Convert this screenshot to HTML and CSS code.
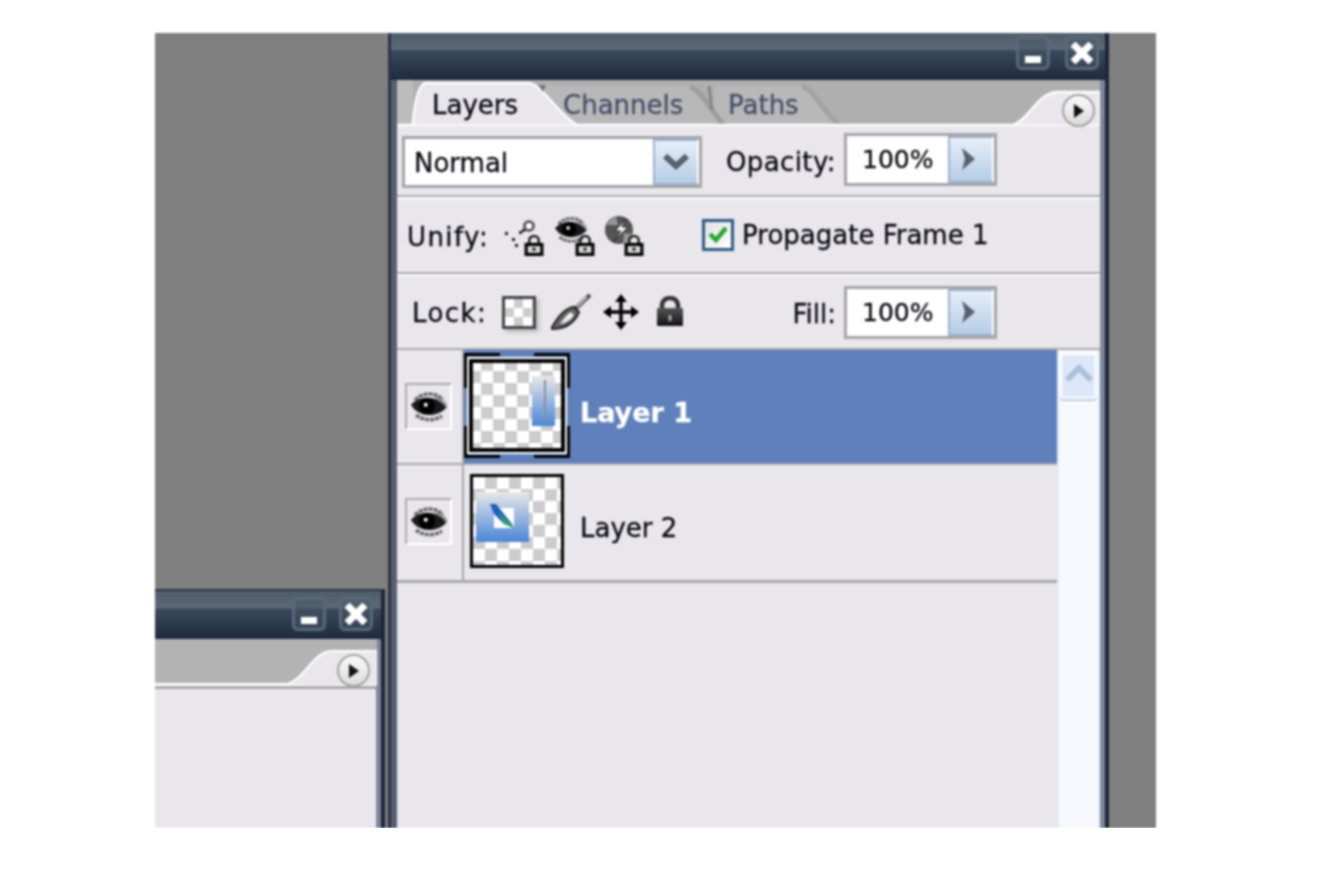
FILE: index.html

```html
<!DOCTYPE html>
<html lang="en">
<head>
  <meta charset="UTF-8" />
  <title>Layers palette</title>
  <link rel="stylesheet" href="styles.css">
</head>
<body>
  <svg class="defs" width="0" height="0">
    <defs>
      <symbol id="lock" viewBox="0 0 18 20">
        <path d="M4.5 9V5a4.5 4 0 0 1 9 0v4" fill="none" stroke="#222" stroke-width="2.4" />
        <rect x="1.5" y="9" width="15" height="9.5" fill="#d8d8d8" stroke="#000" stroke-width="3" />
        <rect x="7.5" y="12" width="3" height="3" fill="#222" />
      </symbol>
      <symbol id="eye" viewBox="0 0 36 30">
        <path d="M4 8C12 0 25 0 32 8" fill="none" stroke="#666" stroke-width="3.5" stroke-dasharray="4 1" />
        <path d="M0 13C8 3 27 3 36 15C27 26 8 26 0 13Z" fill="#1a1a1a" />
        <path d="M25 6C30 8 34 11 36 15" fill="none" stroke="#888" stroke-width="3.5" stroke-dasharray="3 1" />
        <path d="M5 23C13 29 23 29 31 24" fill="none" stroke="#666" stroke-width="3.5" stroke-dasharray="4 1" />
        <circle cx="16" cy="14" r="8" fill="#000" />
        <rect x="13" y="11" width="3.5" height="3.5" fill="#fff" />
      </symbol>
    </defs>
  </svg>

  <div class="canvas">

    <!-- small palette, cut off by the canvas on the left -->
    <div class="panel panel-small">
      <div class="titlebar">
        <span class="win-btn"><i class="min-mark"></i></span>
        <span class="win-btn"><svg width="24" height="22" viewBox="0 0 24 22"><path d="M3 2l18 18M21 2L3 20" stroke="#fff" stroke-width="7" /></svg></span>
      </div>
      <div class="panel-body">
        <div class="strip strip-small">
          <svg class="strip-art" width="222" height="47" viewBox="0 0 222 47">
            <rect width="222" height="47" fill="#b3b3b3" />
            <path d="M0 45H132C150 40 158 13 176 12H222V47H0Z" fill="#e9e7ec" stroke="#fff" stroke-width="2" />
          </svg>
          <span class="menu-btn"><svg width="12" height="16" viewBox="0 0 12 16"><path d="M1 1l10 7-10 7Z" fill="#111" /></svg></span>
        </div>
        <div class="small-content"></div>
      </div>
    </div>

    <!-- layers palette -->
    <div class="panel panel-layers">
      <div class="titlebar">
        <span class="win-btn"><i class="min-mark"></i></span>
        <span class="win-btn"><svg width="24" height="22" viewBox="0 0 24 22"><path d="M3 2l18 18M21 2L3 20" stroke="#fff" stroke-width="7" /></svg></span>
      </div>
      <div class="panel-body">

        <div class="strip">
          <svg class="strip-art" width="703" height="46" viewBox="0 0 703 46">
            <rect width="703" height="46" fill="#afafaf" />
            <rect width="16" height="44" fill="#bcbcbc" />
            <path d="M312 44L318 7Q319 5 323 5H403C416 6 424 30 444 44Z" fill="#b8b8b8" />
            <path d="M405 7C417 8 425 32 442 44" fill="none" stroke="#a2a2a2" stroke-width="5" />
            <path d="M140 44L146 5H291C302 8 312 27 326 44Z" fill="#b8b8b8" />
            <path d="M293 7C304 10 313 29 326 44" fill="none" stroke="#9e9e9e" stroke-width="5" />
            <path d="M312 6L315 30" stroke="#858585" stroke-width="3" />
            <path d="M0 45H16Q18 8 28 3H131C146 4 158 32 180 45H616C632 40 640 13 660 12H703V46H0Z" fill="#e9e7ec" stroke="#fff" stroke-width="2.4" />
            <path d="M141 5l8 0-3 7Z" fill="#777" />
          </svg>
          <div class="tabs">
            <span class="tab tab-active">Layers</span>
            <span class="tab">Channels</span>
            <span class="tab">Paths</span>
          </div>
          <span class="menu-btn"><svg width="12" height="16" viewBox="0 0 12 16"><path d="M1 1l10 7-10 7Z" fill="#111" /></svg></span>
        </div>

        <div class="row row-blend">
          <div class="select">
            <span class="select-value">Normal</span>
            <span class="arrow-btn"><svg width="26" height="18" viewBox="0 0 26 18"><path d="M2 3l11 10L24 3" fill="none" stroke="#56606e" stroke-width="6" /></svg></span>
          </div>
          <span class="label label-opacity">Opacity:</span>
          <div class="spin spin-up">
            <span class="spin-value">100%</span>
            <span class="arrow-btn"><svg class="spin-arrow" width="13" height="22" viewBox="0 0 13 22"><path d="M0 0l13 11L0 22l3-11Z" fill="#56606e" /></svg></span>
          </div>
        </div>

        <div class="row row-unify">
          <span class="label label-spaced">Unify:</span>
          <svg class="icon icon-pos" width="40" height="40" viewBox="0 0 40 40">
            <circle cx="25" cy="10" r="4.5" fill="#fff" stroke="#444" stroke-width="2.6" />
            <path d="M1 16h3v3H1zM8 22h3v3H8zM11 28h3v3h-3zM15 15h3v3h-3zM18 13h3v3h-3z" fill="#222" />
            <use href="#lock" x="20" y="19" width="20" height="21" />
          </svg>
          <svg class="icon icon-eye" width="40" height="40" viewBox="0 0 40 40">
            <use href="#eye" x="0" y="-1" width="32" height="30" />
            <use href="#lock" x="20" y="19" width="20" height="21" />
          </svg>
          <svg class="icon icon-style" width="40" height="40" viewBox="0 0 40 40">
            <circle cx="15" cy="14" r="14" fill="#555" />
            <path d="M3 9a13 13 0 0 1 9-8l2 8ZM19 28a13 13 0 0 0 9-10l-8-1Z" fill="#999" />
            <path d="M22 3L11 15h6L9 26l15-15h-6Z" fill="#fff" stroke="#222" />
            <use href="#lock" x="20" y="19" width="20" height="21" />
          </svg>
          <span class="check"><svg width="20" height="18" viewBox="0 0 20 18"><path d="M2 8l6 6L18 2" fill="none" stroke="#2aa52e" stroke-width="4.5" /></svg></span>
          <span class="label label-frame">Propagate Frame 1</span>
        </div>

        <div class="row row-lock">
          <span class="label label-spaced">Lock:</span>
          <span class="lock-trans"></span>
          <svg class="icon icon-brush" width="40" height="36" viewBox="0 0 40 36">
            <path d="M39 1L22 17" stroke="#444" stroke-width="4" />
            <path d="M36 3L26 13" stroke="#eee" stroke-width="1.5" />
            <path d="M23 13C13 14 6 24 0 35C12 35 23 30 28 18Z" fill="#666" stroke="#222" stroke-width="2" />
            <path d="M20 18C15 21 12 26 9 30C15 29 20 26 23 21Z" fill="#eee" />
          </svg>
          <svg class="icon icon-move" width="36" height="36" viewBox="0 0 36 36">
            <path d="M18 3V33M3 18H33" stroke="#000" stroke-width="3.4" />
            <path d="M18 0l6 8H12ZM18 36l-6-8H24ZM0 18l8-6V24ZM36 18l-8 6V12Z" fill="#000" />
          </svg>
          <svg class="icon icon-padlock" width="30" height="32" viewBox="0 0 30 32">
            <defs>
              <linearGradient id="lockfill" x1="0" y1="0" x2="0" y2="1">
                <stop offset="0" stop-color="#555" />
                <stop offset="1" stop-color="#111" />
              </linearGradient>
            </defs>
            <path d="M6 13V9a8 7 0 0 1 16 0v4" fill="none" stroke="#333" stroke-width="4.5" />
            <rect x="1" y="12" width="26" height="18" rx="1" fill="url(#lockfill)" />
            <rect x="12.5" y="19" width="3" height="6" fill="#aaa" />
          </svg>
          <span class="label label-fill">Fill:</span>
          <div class="spin">
            <span class="spin-value">100%</span>
            <span class="arrow-btn"><svg class="spin-arrow" width="13" height="22" viewBox="0 0 13 22"><path d="M0 0l13 11L0 22l3-11Z" fill="#56606e" /></svg></span>
          </div>
        </div>

        <div class="layers">
          <div class="layer-list">
            <div class="layer layer-selected">
              <div class="eye-col"><span class="eye-box"><svg width="36" height="30"><use href="#eye" /></svg></span></div>
              <div class="layer-main">
                <div class="thumb-wrap">
                  <svg class="thumb-corners" width="106" height="105" viewBox="0 0 106 105">
                    <path d="M1.5 35V1.5H36M70 1.5H104.5V35M104.5 73V103.5H70M36 103.5H1.5V73" fill="none" stroke="#000" stroke-width="3" />
                  </svg>
                  <div class="thumb">
                    <div class="thumb-fill thumb-fill-bar"><i class="bar-line"></i></div>
                  </div>
                </div>
                <span class="layer-name">Layer 1</span>
              </div>
            </div>
            <div class="layer layer-plain">
              <div class="eye-col"><span class="eye-box"><svg width="36" height="30"><use href="#eye" /></svg></span></div>
              <div class="layer-main">
                <div class="thumb thumb-plain">
                  <div class="thumb-fill thumb-fill-logo">
                    <svg width="26" height="26" viewBox="0 0 26 26">
                      <rect x="4" y="4" width="20" height="20" fill="#fff" />
                      <path d="M0 0L6 0L22 20L24 24L14 20L4 10Z" fill="#1f5fc0" />
                      <path d="M8 8L22 21L24 24L14 20Z" fill="#2f9f6a" />
                    </svg>
                  </div>
                </div>
                <span class="layer-name">Layer 2</span>
              </div>
            </div>
          </div>
          <div class="scrollbar">
            <span class="scroll-up"><svg width="30" height="20" viewBox="0 0 30 20"><path d="M3 17L15 5l12 12" fill="none" stroke="#aebfd8" stroke-width="6" /></svg></span>
          </div>
        </div>

      </div>
    </div>
  </div>
</body>
</html>
```

FILE: styles.css

```css
html, body {
  margin: 0;
  background: #fff;
}
body {
  font-family: "DejaVu Sans", sans-serif;
  font-size: 26px;
  line-height: 32px;
  color: #07070f;
  -webkit-text-stroke: 0.3px currentColor;
  padding: 33px 0 0 155px;
}
.defs {
  position: absolute;
}
.canvas {
  position: relative;
  width: 1001px;
  height: 795px;
  background: #808080;
  overflow: hidden;
  filter: blur(0.8px);
}

/* palettes sit on the canvas like windows */
.panel {
  position: absolute;
  display: flex;
  flex-direction: column;
  box-sizing: border-box;
  background: linear-gradient(90deg, #56606f, #7d8798);
  border-right: 4px solid #1d2538;
}
.panel-layers {
  left: 233px;
  top: 0;
  width: 721px;
  height: 795px;
  border-left: 3px solid #2d3442;
}
.panel-small {
  left: 0;
  top: 556px;
  width: 230px;
  height: 239px;
  border-top: 2px solid #2f3846;
}
.titlebar {
  display: flex;
  justify-content: flex-end;
  align-items: center;
  gap: 15px;
  height: 47px;
  flex: none;
  box-sizing: border-box;
  padding: 0 6px 7px 0;
  background: linear-gradient(#4f5d6b 0, #5c6a78 36%, #3a4a5d 37%, #1f293e 100%);
}
.panel-small .titlebar {
  height: 48px;
  padding: 0 8px 3px 0;
  gap: 13px;
}
.win-btn {
  display: flex;
  align-items: center;
  justify-content: center;
  box-sizing: border-box;
  width: 34px;
  height: 34px;
  border: 3px solid #5a6878;
  border-radius: 6px;
  background: rgba(70, 85, 100, 0.5);
}
.min-mark {
  width: 16px;
  height: 7px;
  margin-top: 13px;
  background: #fff;
}
.panel-body {
  flex: 1;
  display: flex;
  flex-direction: column;
  margin: 0 5px 0 6px;
  background: #e9e7ec;
}
.panel-small .panel-body {
  margin-left: 0;
}

/* tab strip */
.strip {
  position: relative;
  height: 46px;
  flex: none;
}
.strip-small {
  height: 47px;
  border-bottom: 3px solid #a8a8a8;
}
.strip-art {
  position: absolute;
  left: 0;
  top: 0;
}
.tabs {
  position: relative;
  height: 46px;
}
.tab {
  color: #454f66;
  position: absolute;
  top: 9px;
}
.tab:nth-child(1) { left: 35px; color: #07070f; }
.tab:nth-child(2) { left: 166px; }
.tab:nth-child(3) { left: 331px; }
.menu-btn {
  position: absolute;
  right: 5px;
  top: 14px;
  display: flex;
  align-items: center;
  justify-content: center;
  box-sizing: border-box;
  width: 33px;
  height: 33px;
  border-radius: 50%;
  border: 2px solid #a2a2a2;
  background: linear-gradient(#fafafa, #dcdcdc);
}
.strip-small .menu-btn {
  right: 6px;
  top: 15px;
}

/* option rows */
.row {
  display: flex;
  align-items: center;
  box-sizing: border-box;
  flex: none;
  padding-right: 103px;
  border-bottom: 2px solid #a8a8ad;
  border-top: 2px solid #fff;
}
.row-blend {
  height: 71px;
  border-top: 0;
  padding-left: 5px;
}
.row-unify {
  height: 77px;
  padding-left: 10px;
}
.row-lock {
  height: 76px;
  padding-left: 15px;
}
.label {
  position: relative;
  top: 1px;
}
.label-spaced {
  letter-spacing: 1.4px;
}
.label-opacity {
  margin-left: auto;
  margin-right: 8px;
  letter-spacing: 0.4px;
}
.label-fill {
  margin-left: auto;
  margin-right: 8px;
  top: 2px;
}
.select {
  display: flex;
  box-sizing: border-box;
  width: 300px;
  height: 52px;
  margin-top: 3px;
  border: 3px solid #a4a4a9;
  background: #fff;
}
.select-value {
  flex: 1;
  padding: 8px 0 0 9px;
}
.arrow-btn {
  display: flex;
  align-items: center;
  justify-content: center;
  width: 46px;
  box-sizing: border-box;
  border: 2px solid #9db1cd;
  border-right-color: #fff;
  background: linear-gradient(#e6eff9, #b6cce6);
}
.spin-arrow {
  margin-right: 5px;
}
.spin {
  display: flex;
  box-sizing: border-box;
  width: 153px;
  height: 53px;
  border: 3px solid #a4a4a9;
  background: #fff;
}
.spin-up {
  margin-bottom: 3px;
}
.spin-value {
  flex: 1;
  padding: 8px 0 0 15px;
  font-size: 25px;
}
.icon {
  flex: none;
}
.icon-pos { margin-left: 15px; }
.icon-eye { margin-left: 11px; }
.icon-style { margin-left: 9px; }
.check {
  display: flex;
  align-items: center;
  justify-content: center;
  box-sizing: border-box;
  width: 32px;
  height: 32px;
  margin-left: 58px;
  margin-bottom: 2px;
  border: 3px solid #2c5a86;
  background: linear-gradient(135deg, #e2e2e2, #fff);
}
.label-frame {
  margin-left: 8px;
  top: -1px;
}
.lock-trans {
  flex: none;
  box-sizing: border-box;
  width: 34px;
  height: 33px;
  margin-left: 15px;
  border: 3px solid #444;
  background: conic-gradient(#ccc 25%, #fff 0 50%, #ccc 0 75%, #fff 0) 0 0 / 18px 18px;
  box-shadow: 3px 3px 4px #bbb;
}
.icon-brush { margin-left: 15px; }
.icon-move { margin-left: 12px; }
.icon-padlock { margin-left: 17px; }

/* layer list */
.layers {
  flex: 1;
  display: flex;
}
.layer-list {
  flex: 1;
}
.layer {
  display: flex;
  box-sizing: border-box;
  border-bottom: 2px solid #a8a8ad;
}
.layer-selected {
  height: 115px;
}
.layer-plain {
  height: 118px;
  border-bottom-width: 3px;
}
.eye-col {
  flex: none;
  box-sizing: border-box;
  width: 67px;
  padding: 33px 0 0 8px;
  border-right: 2px solid #a8a8ad;
}
.eye-box {
  display: flex;
  align-items: center;
  justify-content: center;
  box-sizing: border-box;
  width: 47px;
  height: 47px;
  border: 2px solid;
  border-color: #a8a8a8 #fff #fff #a8a8a8;
}
.layer-main {
  flex: 1;
  display: flex;
  align-items: center;
}
.layer-selected .layer-main {
  background: #5f80ba;
}
.thumb-wrap {
  position: relative;
  flex: none;
  box-sizing: border-box;
  width: 106px;
  height: 105px;
  margin-top: -3px;
  padding: 4px 3px;
}
.thumb-corners {
  position: absolute;
  left: 0;
  top: 0;
}
.thumb {
  position: relative;
  flex: none;
  box-sizing: border-box;
  width: 100px;
  height: 97px;
  background: conic-gradient(#ccc 25%, #fff 0 50%, #ccc 0 75%, #fff 0) 0 0 / 24px 24px;
}
.thumb-wrap .thumb {
  border: 2px solid #fff;
  outline: 4px solid #000;
  outline-offset: -6px;
  background-origin: content-box;
}
.thumb-plain {
  width: 94px;
  height: 94px;
  margin: -4px 0 0 6px;
  border: 3px solid #000;
}
.thumb-fill {
  position: absolute;
  background: linear-gradient(#e8e8e8, #4a86d8);
}
.thumb-fill-bar {
  left: 63px;
  top: 17px;
  width: 23px;
  height: 50px;
}
.bar-line {
  display: block;
  width: 2px;
  height: 42px;
  margin: 4px 0 0 12px;
  background: #8a9098;
}
.thumb-fill-logo {
  left: 3px;
  top: 15px;
  width: 53px;
  height: 50px;
  display: flex;
  justify-content: center;
  align-items: center;
}
.layer-name {
  margin-left: 10px;
  position: relative;
  top: 6px;
}
.layer-plain .layer-name {
  margin-left: 16px;
  top: 5px;
}
.layer-selected .layer-name {
  color: #fff;
  font-weight: bold;
  font-size: 27px;
}
.scrollbar {
  flex: none;
  box-sizing: border-box;
  width: 43px;
  padding: 3px 1px;
  background: #f7f9fe;
  border: solid #dfeafc;
  border-width: 0 2px;
}
.scroll-up {
  display: flex;
  align-items: center;
  justify-content: center;
  box-sizing: border-box;
  height: 46px;
  border: 2px solid #fff;
  border-radius: 4px;
  background: #dce8fa;
  box-shadow: 0 2px 0 #bccbdf;
  padding-bottom: 6px;
}
.small-content {
  flex: 1;
}
```
